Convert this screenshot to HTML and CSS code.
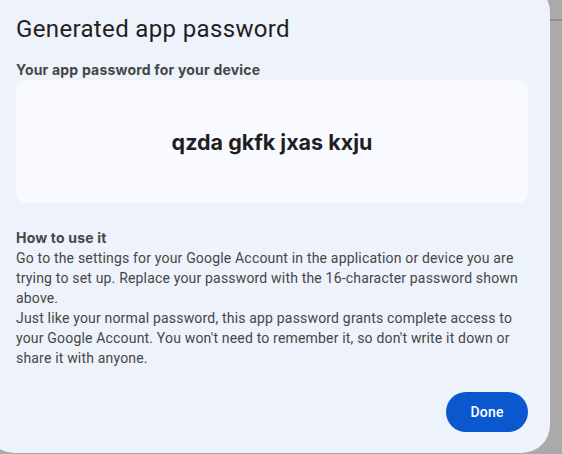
FILE: index.html
```html
<!DOCTYPE html>
<html lang="en">
<head>
<meta charset="utf-8">
<title>Generated app password</title>
<link rel="stylesheet" href="styles.css">
</head>
<body>
<div class="dialog">
  <h1 class="title">Generated app password</h1>
  <h2 class="label">Your app password for your device</h2>
  <div class="card">
    <span class="password">qzda gkfk jxas kxju</span>
  </div>
  <div class="howto">
    <h3 class="howto-title">How to use it</h3>
    <p class="howto-text">Go to the settings for your Google Account in the application or device you are trying to set up. Replace your password with the 16-character password shown above.<br>Just like your normal password, this app password grants complete access to your Google Account. You won't need to remember it, so don't write it down or share it with anyone.</p>
  </div>
  <div class="actions">
    <button class="done">Done</button>
  </div>
</div>
</body>
</html>
```
FILE: styles.css
```css
html, body {
  margin: 0;
  padding: 0;
  height: 100%;
  overflow: hidden;
}
body {
  background: linear-gradient(to bottom, #aaaaaa 0, #aaaaaa 19px, #8f8f8f 19px, #8f8f8f 21px, #aaaaaa 21px);
  font-family: Roboto, "Noto Sans", Arial, sans-serif;
}
.dialog {
  box-sizing: border-box;
  width: 564px;
  margin: -16px 0 0 -14px;
  padding: 29px 22px 21px 30px;
  background: #eef2fa;
  border-radius: 28px;
  display: flex;
  flex-direction: column;
}
.title {
  margin: 0;
  font-size: 24px;
  line-height: 32px;
  font-weight: 400;
  letter-spacing: 0.35px;
  color: #1f1f1f;
}
.label {
  margin: 15px 0 0;
  font-family: Inter, Roboto, sans-serif;
  font-size: 14px;
  line-height: 20px;
  font-weight: 700;
  letter-spacing: 0.2px;
  color: #444746;
}
.card {
  height: 123px;
  background: #f8faff;
  border-radius: 10px;
  display: flex;
  align-items: center;
  justify-content: center;
}
.password {
  font-family: Inter, Roboto, sans-serif;
  font-size: 21.5px;
  line-height: 28px;
  font-weight: 700;
  color: #1f1f1f;
}
.howto {
  margin-top: 25px;
  color: #444746;
  font-size: 14px;
  line-height: 20px;
  letter-spacing: 0.18px;
}
.howto-title {
  margin: 0;
  font-family: Inter, Roboto, sans-serif;
  font-size: 14px;
  line-height: 20px;
  font-weight: 700;
  letter-spacing: 0.2px;
}
.howto-text {
  margin: 0;
}
.actions {
  display: flex;
  justify-content: flex-end;
  margin-top: 24px;
}
.done {
  height: 40px;
  width: 82px;
  border: none;
  border-radius: 20px;
  background: #0b57d0;
  color: #ffffff;
  font-family: inherit;
  font-size: 14px;
  font-weight: 500;
  letter-spacing: 0.2px;
  padding: 0;
}
```
